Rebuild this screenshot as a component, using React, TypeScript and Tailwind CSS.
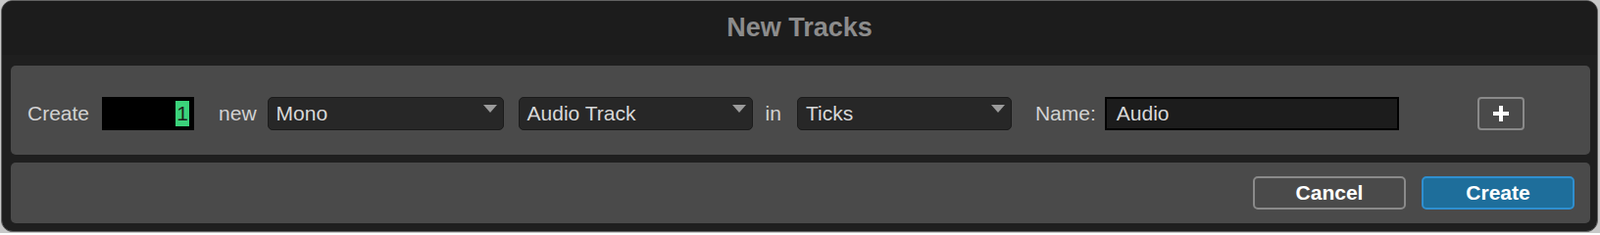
import { ReactNode } from "react";

const Select = ({ label, width }: { label: string; width: string }) => (
  <div
    className={`relative flex h-[34px] ${width} items-center rounded-[5px] border border-[#1b1b1b] bg-[#272727] pl-[8px] text-[21px] text-[#d8d8d8]`}
  >
    <span className="leading-none">{label}</span>
    <svg
      className="absolute right-[6px] top-[7px]"
      width="14"
      height="9"
      viewBox="0 0 14 9"
    >
      <polygon points="0,0 14,0 7,8" fill="#9b9b9b" />
    </svg>
  </div>
);

const Label = ({ children, className = "" }: { children: ReactNode; className?: string }) => (
  <span className={`text-[21px] leading-none text-[#d2d2d2] ${className}`}>{children}</span>
);

export default function App() {
  return (
    <div
      className="h-[238px] w-[1632px] bg-[#c8c8c8] pb-[1px] pl-[1px] pr-[2px]"
      style={{ fontFamily: '"Liberation Sans", Arial, sans-serif' }}
    >
      <div className="flex h-[237px] flex-col overflow-hidden rounded-[12px] border border-[#626262] bg-[#1f1f1f]">
        {/* title bar */}
        <div className="flex h-[55px] shrink-0 items-center justify-center bg-[#1c1c1c]">
          <span className="text-[27px] font-bold text-[#8c8c8c]">New Tracks</span>
        </div>

        <div className="flex flex-1 flex-col gap-[8px] pb-[8px] pl-[9px] pr-[7px] pt-[11px]">
          {/* options row */}
          <div className="flex h-[91px] items-center rounded-[5px] bg-[#4a4a4a] pl-[17px] pt-[6px]">
            <Label>Create</Label>
            <div className="ml-[13px] flex h-[34px] w-[94px] items-center justify-end bg-black pr-[5px]">
              <span className="flex h-[26px] w-[14px] items-center justify-center bg-[#3bd27b] text-[21px] leading-none text-[#1e1e1e]">
                1
              </span>
            </div>
            <Label className="ml-[25px]">new</Label>
            <div className="ml-[11px]">
              <Select label="Mono" width="w-[241px]" />
            </div>
            <div className="ml-[15px]">
              <Select label="Audio Track" width="w-[239px]" />
            </div>
            <Label className="ml-[13px]">in</Label>
            <div className="ml-[16px]">
              <Select label="Ticks" width="w-[219px]" />
            </div>
            <Label className="ml-[24px]">Name:</Label>
            <div className="ml-[9px] flex h-[34px] w-[300px] items-center border-2 border-black bg-[#1c1c1c] pl-[10px]">
              <span className="text-[21px] leading-none text-[#d8d8d8]">Audio</span>
            </div>
            <button className="ml-[80px] flex h-[34px] w-[48px] items-center justify-center rounded-[4px] border-2 border-[#8a8a8a] bg-[#4a4a4a]">
              <svg width="16" height="16" viewBox="0 0 16 16">
                <rect x="6" y="0" width="4" height="16" fill="#ffffff" />
                <rect x="0" y="6" width="16" height="4" fill="#ffffff" />
              </svg>
            </button>
          </div>

          {/* action row */}
          <div className="flex h-[62px] items-center justify-end gap-[16px] rounded-[5px] bg-[#4a4a4a] pr-[16px]">
            <button className="flex h-[34px] w-[156px] items-center justify-center rounded-[5px] border-2 border-[#8a8a8a] bg-[#4a4a4a] text-[21px] font-bold text-white">
              Cancel
            </button>
            <button className="flex h-[34px] w-[156px] items-center justify-center rounded-[5px] border-2 border-[#2f8fcf] bg-[#1e6e9b] text-[21px] font-bold text-white">
              Create
            </button>
          </div>
        </div>
      </div>
    </div>
  );
}
